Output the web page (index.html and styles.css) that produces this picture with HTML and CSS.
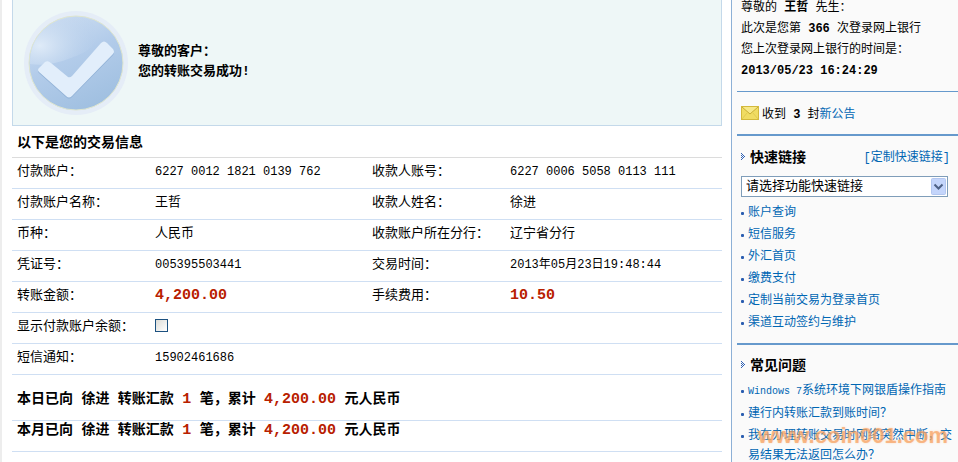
FILE: index.html
```html
<!DOCTYPE html>
<html lang="zh-CN">
<head>
    <meta charset="UTF-8">
    <meta name="viewport" content="width=device-width, initial-scale=1.0">
    <title>转账汇款</title>
    <link rel="stylesheet" href="styles.css">
</head>
<body>
    <div class="page">
        <main class="main">
            <div class="success">
                <svg class="success-icon" viewBox="0 0 106 106" width="106" height="106" aria-hidden="true">
                    <defs>
                        <linearGradient id="ball" x1="0.2" y1="0" x2="0.7" y2="1">
                            <stop offset="0" stop-color="#cfdff2"/>
                            <stop offset="0.45" stop-color="#b3ccea"/>
                            <stop offset="1" stop-color="#9fbfe0"/>
                        </linearGradient>
                        <radialGradient id="shine" cx="0.15" cy="0.6" r="0.8">
                            <stop offset="0" stop-color="#dfebf8"/>
                            <stop offset="1" stop-color="#b9d0ec" stop-opacity="0.2"/>
                        </radialGradient>
                    </defs>
                    <circle cx="53" cy="53" r="52" fill="#e5edf7"/>
                    <circle cx="53" cy="53" r="47" fill="url(#ball)" stroke="#dfe6cf"/>
                    <path d="M7 54C6 27 27 8 52 7c13 0 17 4 20 10 5 19-8 25-24 31-16 6-27 8-41 6z" fill="url(#shine)"/>
                    <path d="M16 58l6-6q3-2 6 1l17 14q2 1 4-1l29-33q3-3 6 0l6 6q2 3 0 5L49 86q-3 3-6 0L16 62q-2-2 0-4z" fill="#8fb0d6" transform="translate(0 1)"/>
                    <path d="M16 58l6-6q3-2 6 1l17 14q2 1 4-1l29-33q3-3 6 0l6 6q2 3 0 5L49 86q-3 3-6 0L16 62q-2-2 0-4z" fill="#e2eefb"/>
                </svg>
                <p>尊敬的客户：<br>您的转账交易成功!</p>
            </div>

            <h1>以下是您的交易信息</h1>
            <table class="info">
                <tr>
                    <th scope="row">付款账户：</th>
                    <td><span class="num">6227 0012 1821 0139 762</span></td>
                    <th scope="row">收款人账号：</th>
                    <td><span class="num">6227 0006 5058 0113 111</span></td>
                </tr>
                <tr>
                    <th scope="row">付款账户名称：</th>
                    <td>王哲</td>
                    <th scope="row">收款人姓名：</th>
                    <td>徐进</td>
                </tr>
                <tr>
                    <th scope="row">币种：</th>
                    <td>人民币</td>
                    <th scope="row">收款账户所在分行：</th>
                    <td>辽宁省分行</td>
                </tr>
                <tr>
                    <th scope="row">凭证号：</th>
                    <td><span class="num">005395503441</span></td>
                    <th scope="row">交易时间：</th>
                    <td><span class="num">2013年05月23日19:48:44</span></td>
                </tr>
                <tr>
                    <th scope="row">转账金额：</th>
                    <td><b class="money">4,200.00</b></td>
                    <th scope="row">手续费用：</th>
                    <td><b class="money">10.50</b></td>
                </tr>
                <tr>
                    <th scope="row"><label for="showBalance">显示付款账户余额：</label></th>
                    <td class="check" colspan="3"><input type="checkbox" id="showBalance"></td>
                </tr>
                <tr>
                    <th scope="row">短信通知：</th>
                    <td colspan="3"><span class="num">15902461686</span></td>
                </tr>
            </table>

            <div class="totals">
                <p>本日已向 徐进 转账汇款 <span class="money">1</span> 笔，累计 <span class="money">4,200.00</span> 元人民币</p>
                <p>本月已向 徐进 转账汇款 <span class="money">1</span> 笔，累计 <span class="money">4,200.00</span> 元人民币</p>
            </div>
        </main>

        <aside class="sidebar">
            <p class="welcome">
                尊敬的 <b>王哲</b> 先生：<br>
                此次是您第 <b>366</b> 次登录网上银行<br>
                您上次登录网上银行的时间是：<br>
                <b>2013/05/23 16:24:29</b>
            </p>
            <div class="notice">
                <svg viewBox="0 0 18 14" width="18" height="14" aria-hidden="true">
                    <rect x="0.5" y="0.5" width="17" height="13" fill="#f0dc62" stroke="#d3b93c"/>
                    <path d="M1 1l8 7 8-7" fill="#f7e988" stroke="#c9ad34"/>
                    <path d="M1 13l5-6M17 13l-5-6" fill="none" stroke="#e2cb50"/>
                </svg>
                <span>收到 <b>3</b> 封<a href="#">新公告</a></span>
            </div>

            <section class="quick">
                <div class="section-head">
                    <svg viewBox="0 0 5 7" width="5" height="7" aria-hidden="true">
                        <path d="M0 0h1v1h-1zM1 1h1v1h-1zM2 2h1v1h-1zM3 3h1v1h-1zM2 4h1v1h-1zM1 5h1v1h-1zM0 6h1v1h-1zM0 2h1v1h-1zM1 3h1v1h-1zM0 4h1v1h-1z" fill="#2f62b5"/>
                    </svg>
                    <h2>快速链接</h2>
                    <a href="#">[定制快速链接]</a>
                </div>
                <div class="select-box">
                    <select aria-label="快速链接">
                        <option>请选择功能快速链接</option>
                    </select>
                    <svg viewBox="0 0 15 17" width="15" height="17" aria-hidden="true">
                        <rect x="0.5" y="0.5" width="14" height="16" rx="1" fill="#c4d5fb" stroke="#b3c7f0"/>
                        <path d="M3.5 6.5l4 4 4-4" fill="none" stroke="#4d6185" stroke-width="2"/>
                    </svg>
                </div>
                <ul>
                    <li><a href="#">账户查询</a></li>
                    <li><a href="#">短信服务</a></li>
                    <li><a href="#">外汇首页</a></li>
                    <li><a href="#">缴费支付</a></li>
                    <li><a href="#">定制当前交易为登录首页</a></li>
                    <li><a href="#">渠道互动签约与维护</a></li>
                </ul>
            </section>

            <section class="faq">
                <div class="section-head">
                    <svg viewBox="0 0 5 7" width="5" height="7" aria-hidden="true">
                        <path d="M0 0h1v1h-1zM1 1h1v1h-1zM2 2h1v1h-1zM3 3h1v1h-1zM2 4h1v1h-1zM1 5h1v1h-1zM0 6h1v1h-1zM0 2h1v1h-1zM1 3h1v1h-1zM0 4h1v1h-1z" fill="#2f62b5"/>
                    </svg>
                    <h2>常见问题</h2>
                </div>
                <ul>
                    <li><a href="#"><span class="latin">Windows 7</span>系统环境下网银盾操作指南</a></li>
                    <li><a href="#">建行内转账汇款到账时间？</a></li>
                    <li class="marked"><a href="#">我在办理转账交易时网络突然中断，交易结果无法返回怎么办？</a><span class="watermark">www.coin001.com</span></li>
                </ul>
            </section>
        </aside>
    </div>
</body>
</html>
```
FILE: styles.css
```css
* {
    box-sizing: border-box;
}
body {
    margin: 0;
    font-family: "Liberation Mono", "Noto Sans CJK SC", monospace;
    font-size: 13px;
    color: #000;
    background: #fff;
}
h1, h2, p, ul {
    margin: 0;
    padding: 0;
}
a {
    color: #0066b3;
    text-decoration: none;
}
.page {
    display: flex;
    height: 100vh;
    overflow: hidden;
    border-left: 2px solid #ededed;
}

/* transfer result */
.main {
    flex: 1;
    padding: 0 9px 0 10px;
}
.success {
    display: flex;
    align-items: center;
    gap: 9px;
    height: 126px;
    padding-left: 10px;
    background: #eef7f7;
    border: 1px solid #c4d9ea;
    border-top: none;
}
.success p {
    font-weight: bold;
    line-height: 20px;
    padding-bottom: 2px;
}
.main h1 {
    height: 31px;
    font-size: 14px;
    line-height: 34px;
    padding-left: 5px;
}
.info {
    width: 100%;
    table-layout: fixed;
    border-collapse: collapse;
    border-top: 1px solid #dcdcdc;
}
.info th, .info td {
    height: 31px;
    padding: 0 0 2px 5px;
    line-height: 28px;
    text-align: left;
    font-weight: normal;
    white-space: nowrap;
    border-bottom: 1px solid #cfdff3;
}
.info th {
    width: 138px;
}
.info .check {
    padding-bottom: 6px;
}
.num {
    font-size: 12px;
}
.money {
    font-size: 15px;
    font-weight: bold;
    color: #b82000;
}
.info input {
    appearance: none;
    display: block;
    width: 13px;
    height: 13px;
    margin: 0;
    border: 1px solid #1c5180;
    background: linear-gradient(135deg, #dcdcd7, #fff);
}
.totals {
    padding-top: 15px;
}
.totals p {
    height: 31px;
    padding-left: 5px;
    font-size: 14px;
    font-weight: bold;
    line-height: 19px;
    border-bottom: 1px solid #cfdff3;
}

/* right column */
.sidebar {
    width: 227px;
    padding-left: 5px;
    font-size: 12px;
    background: #fafafa;
    border-left: 1px solid #8db0d6;
}
.welcome {
    height: 94px;
    margin-top: -2px;
    padding-left: 4px;
    line-height: 21px;
    border-bottom: 1px solid #6699cc;
}
.notice {
    display: flex;
    align-items: center;
    gap: 3px;
    height: 42px;
    padding-left: 4px;
}
.quick, .faq {
    border-top: 2px solid #6699cc;
    padding: 0 0 0 4px;
}
.quick {
    height: 209px;
}
.section-head {
    display: flex;
    align-items: center;
    gap: 4px;
    height: 40px;
    padding-right: 8px;
}
.section-head h2 {
    font-size: 14px;
}
.section-head a {
    margin-left: auto;
}
.select-box {
    position: relative;
    height: 21px;
    margin-right: 10px;
}
.select-box select {
    appearance: none;
    display: block;
    width: 100%;
    height: 21px;
    padding: 0 20px 1px 4px;
    font-family: inherit;
    font-size: 13px;
    color: #000;
    background: #fff;
    border: 1px solid #7f9db9;
    border-radius: 0;
}
.select-box svg {
    position: absolute;
    top: 2px;
    right: 2px;
    pointer-events: none;
}
.sidebar ul {
    list-style: none;
}
.quick ul {
    padding-top: 6px;
}
.sidebar li {
    display: flex;
    line-height: 20px;
    margin-bottom: 2px;
}
.sidebar li::before {
    content: "";
    flex: none;
    width: 3px;
    height: 3px;
    margin: 9px 4px 0 0;
    border-radius: 1px;
    background: #2a5db0;
}
.faq .section-head {
    height: 36px;
    padding-top: 2px;
}
.latin {
    font-size: 10px;
}
.marked {
    position: relative;
}
.watermark {
    position: absolute;
    top: 0;
    right: 10px;
    font-family: "Liberation Sans", Arial, sans-serif;
    font-size: 22px;
    font-weight: bold;
    line-height: 20px;
    color: rgba(246, 150, 80, 0.6);
    text-shadow: 0 0 2px rgba(255, 200, 150, 0.6);
    pointer-events: none;
}
```
